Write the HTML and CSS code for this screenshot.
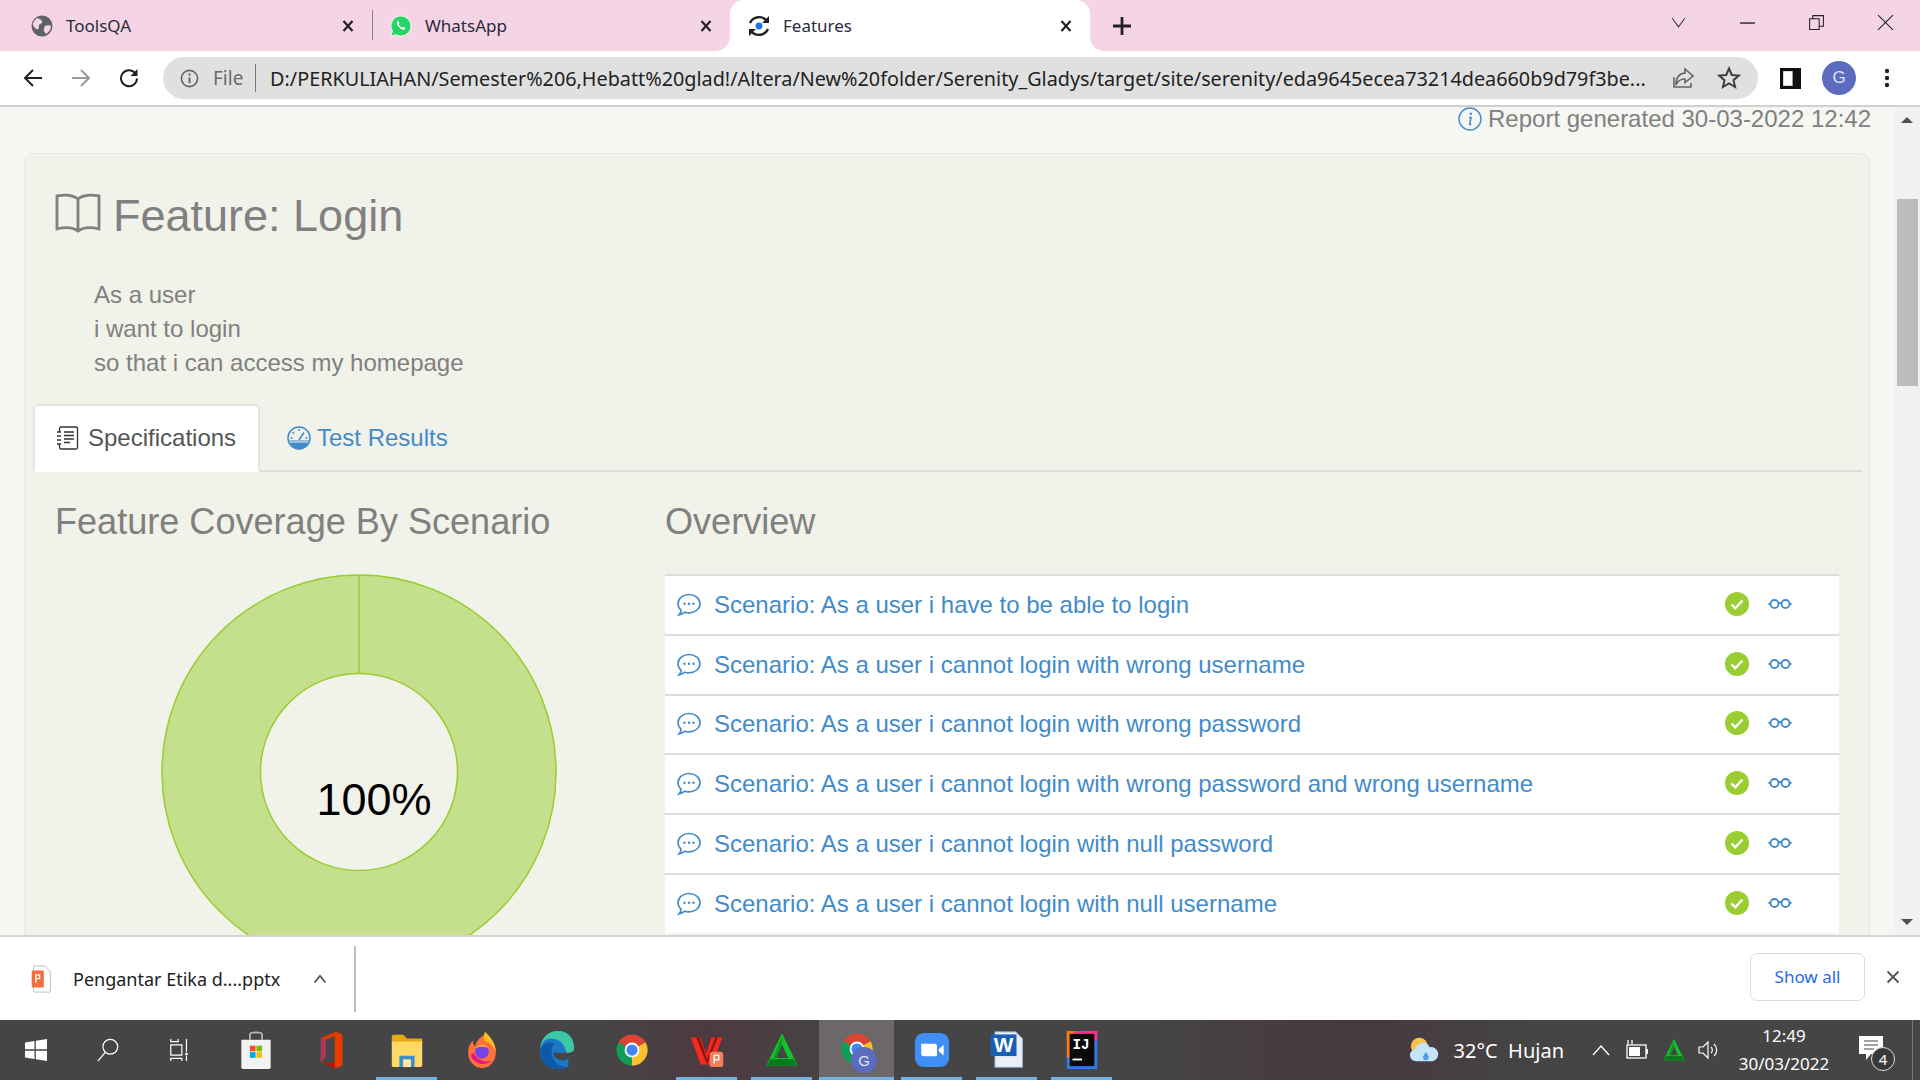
FILE: index.html
```html
<!DOCTYPE html>
<html lang="en">
<head>
<meta charset="utf-8">
<title>Features</title>
<link rel="stylesheet" href="styles.css">
</head>
<body>
<svg class="defs" width="0" height="0" aria-hidden="true">
  <symbol id="chrome" viewBox="0 0 32 32">
    <path d="M16 16 L4 9 A14 14 0 0 1 28.100 9 Z" fill="#db4437"/>
    <path d="M16 16 L28.100 9 A14 14 0 0 1 16 30 Z" fill="#fbc02d"/>
    <path d="M16 16 L16 30 A14 14 0 0 1 4 9 Z" fill="#0f9d58"/>
    <circle cx="16" cy="16" r="6.600" fill="#fff"/>
    <circle cx="16" cy="16" r="5" fill="#4285f4"/>
  </symbol>
  <symbol id="triangle" viewBox="0 0 32 32">
    <path d="M16 1 L30 30 L2 30 Z" fill="#12c42b"/>
    <path d="M2 30 L6 24 L26 24 L30 30 Z" fill="#067a1c"/>
    <path d="M16 11 L21.500 23 L11 23 Z" fill="#444"/>
    <path d="M16 11 L11 23 L8 24 L16 4 Z" fill="#0a9a24"/>
  </symbol>
  <symbol id="chat" viewBox="0 0 24 24">
    <path d="M12 1.500c6 0 11 4 11 9.200s-5 9.200-11 9.200c-1.500 0-2.900-.2-4.200-.7-1.500 1.400-3.300 2.300-5.800 2.800 1.300-1.500 2-2.900 2.200-4.700C2.300 15.600 1 13.300 1 10.700 1 5.500 6 1.500 12 1.500Z" fill="none" stroke="#428bca" stroke-width="1.600"/>
    <circle cx="7.500" cy="10.800" r="1.200" fill="#428bca"/><circle cx="12" cy="10.800" r="1.200" fill="#428bca"/><circle cx="16.500" cy="10.800" r="1.200" fill="#428bca"/>
  </symbol>
  <symbol id="check" viewBox="0 0 24 24">
    <circle cx="12" cy="12" r="12" fill="#9acd32"/>
    <path d="M6.500 12.500 L10.300 16.200 L17.500 8.500" fill="none" stroke="#fff" stroke-width="2.400"/>
  </symbol>
  <symbol id="glasses" viewBox="0 0 24 24">
    <circle cx="6.500" cy="12" r="4" fill="none" stroke="#428bca" stroke-width="1.800"/>
    <circle cx="17.500" cy="12" r="4" fill="none" stroke="#428bca" stroke-width="1.800"/>
    <path d="M10.500 11.500 Q12 10.500 13.500 11.500 M0.500 12 H2.500 M21.500 12 H23.500" fill="none" stroke="#428bca" stroke-width="1.800"/>
  </symbol>
  <symbol id="tabclose" viewBox="0 0 16 16">
    <path d="M3.500 3 L12.500 13 M12.500 3 L3.500 13" fill="none" stroke="#222" stroke-width="2.200"/>
  </symbol>
</svg>

<div class="page">
  <header class="tabstrip">
    <div class="tab tab-first">
      <svg class="fav" viewBox="0 0 22 22"><circle cx="11" cy="11" r="10.500" fill="#5f6368"/><path d="M6 3c2 1 4 1 5 3s-2 3-3 4 1 3-1 4-4-2-5-4 2-5 4-7ZM14 11c2-1 5-1 6 0 0 3-2 6-5 8-1-2-3-3-2-5s0-2 1-3Z" fill="#f5d5e5"/></svg>
      <span class="tab-title">ToolsQA</span>
      <svg class="tab-x"><use href="#tabclose"/></svg>
    </div>
    <span class="tab-sep"></span>
    <div class="tab tab-second">
      <svg class="fav" viewBox="0 0 22 22"><path d="M11 1a10 10 0 0 1 0 20c-1.800 0-3.500-.5-5-1.300L1 21l1.400-4.800A10 10 0 0 1 11 1Z" fill="#25d366" stroke="#fff" stroke-width=".8"/><path d="M7.800 5.800c-1.500 1.300-1.300 3.500.8 6 2.100 2.400 4.400 3.600 6.100 2.800l.8-1.600-2.400-1.300-1 1c-1.300-.5-2.700-2-3.300-3.200l.8-1.100-1.200-2.500Z" fill="#fff"/></svg>
      <span class="tab-title">WhatsApp</span>
      <svg class="tab-x"><use href="#tabclose"/></svg>
    </div>
    <div class="tab tab-active">
      <svg class="fav fav-big" viewBox="0 0 24 24"><path d="M20 7A10 10 0 0 0 3 9M4 17a10 10 0 0 0 17-2" fill="none" stroke="#222" stroke-width="2.400"/><path d="M22 2v7h-7ZM2 22v-7h7Z" fill="#222"/><circle cx="12" cy="12" r="3.400" fill="#1a73e8"/></svg>
      <span class="tab-title">Features</span>
      <svg class="tab-x"><use href="#tabclose"/></svg>
    </div>
    <svg class="newtab" viewBox="0 0 20 20"><path d="M10 1V19M1 10H19" stroke="#222" stroke-width="2.800"/></svg>
    <div class="winctl">
      <svg class="wc" viewBox="0 0 16 16"><path d="M2 4 L8 12 L14 4" fill="none" stroke="#333" stroke-width="1"/></svg>
      <svg class="wc" viewBox="0 0 16 16"><path d="M1 8.500H15" stroke="#111" stroke-width="1.200"/></svg>
      <svg class="wc" viewBox="0 0 16 16"><path d="M1.500 4.500H10.500V14.500H1.500ZM4.500 4.500V1.500H14.500V11.500H10.500" fill="none" stroke="#222" stroke-width="1"/></svg>
      <svg class="wc" viewBox="0 0 16 16"><path d="M1 1 L15 15 M15 1 L1 15" stroke="#222" stroke-width="1"/></svg>
    </div>
  </header>

  <nav class="toolbar">
    <svg class="tb-ico" viewBox="0 0 20 20"><path d="M19 10H2M10 2 L2 10 L10 18" fill="none" stroke="#222" stroke-width="2"/></svg>
    <svg class="tb-ico" viewBox="0 0 20 20"><path d="M1 10H18M10 2 L18 10 L10 18" fill="none" stroke="#9a9a9a" stroke-width="2"/></svg>
    <svg class="tb-ico" viewBox="0 0 20 20"><path d="M16.800 6A8 8 0 1 0 18 10.500" fill="none" stroke="#222" stroke-width="2"/><path d="M18.500 1V8H11.500Z" fill="#222"/></svg>
    <div class="omnibox">
      <svg class="omni-info" viewBox="0 0 20 20"><circle cx="10" cy="10" r="8.500" fill="none" stroke="#5f6368" stroke-width="1.700"/><path d="M10 9V15" stroke="#5f6368" stroke-width="2"/><circle cx="10" cy="6" r="1.200" fill="#5f6368"/></svg>
      <span class="omni-file">File</span>
      <span class="omni-sep"></span>
      <span class="omni-url">D:/PERKULIAHAN/Semester%206,Hebatt%20glad!/Altera/New%20folder/Serenity_Gladys/target/site/serenity/eda9645ecea73214dea660b9d79f3be...</span>
      <svg class="omni-ico" viewBox="0 0 24 24"><path d="M3 11V21H20V17" fill="none" stroke="#5f6368" stroke-width="1.600"/><path d="M14 3 L22 10 L14 16.500V13C9 13 6.500 15 5 19 5 12 8 7.500 14 7Z" fill="none" stroke="#5f6368" stroke-width="1.600"/></svg>
      <svg class="omni-ico omni-star" viewBox="0 0 24 24"><path d="M12 2.500 L14.800 9 L21.800 9.600 L16.500 14.200 L18.100 21 L12 17.400 L5.900 21 L7.500 14.200 L2.200 9.600 L9.200 9Z" fill="none" stroke="#3c4043" stroke-width="2"/></svg>
    </div>
    <svg class="side-ico" viewBox="0 0 20 20"><rect x="1.500" y="1.500" width="17" height="17" fill="none" stroke="#111" stroke-width="3"/><rect x="12" y="2" width="6" height="16" fill="#111"/></svg>
    <div class="avatar">G</div>
    <svg class="menu-ico" viewBox="0 0 6 24"><circle cx="3" cy="5" r="2.200" fill="#222"/><circle cx="3" cy="12" r="2.200" fill="#222"/><circle cx="3" cy="19" r="2.200" fill="#222"/></svg>
  </nav>

  <main class="viewport">
    <div class="content">
      <p class="report">
        <svg class="report-ico" viewBox="0 0 24 24"><circle cx="12" cy="12" r="11" fill="none" stroke="#428bca" stroke-width="1.400"/><path d="M11 10.500h2l-1.300 7h1.500" fill="none" stroke="#428bca" stroke-width="1.600"/><circle cx="12.800" cy="6.800" r="1.300" fill="#428bca"/></svg>
        Report generated 30-03-2022 12:42
      </p>
      <section class="panel">
        <h1 class="title">
          <svg class="book" viewBox="0 0 46 40"><path d="M23 6C18 2 10 1.500 2 3V36C10 34 18 34.500 23 38 28 34.500 36 34 44 36V3C36 1.500 28 2 23 6ZM23 6V38" fill="none" stroke="#808080" stroke-width="2.800"/></svg>
          Feature: Login
        </h1>
        <div class="narrative">
          <div>As a user</div>
          <div>i want to login</div>
          <div>so that i can access my homepage</div>
        </div>
        <div class="tabs">
          <div class="rtab rtab-on">
            <svg class="rtab-ico" viewBox="0 0 24 24"><path d="M4.500 6V2.500a1.500 1.500 0 0 1 1.500-1.500H21a1.500 1.500 0 0 1 1.500 1.500v19a1.500 1.500 0 0 1-1.500 1.500H6a1.500 1.500 0 0 1-1.500-1.500V18" fill="none" stroke="#333" stroke-width="1.300"/><path d="M9 6H19M9 9.500H19M9 13H19M9 16.500H15M2 6H6M2 10H6M2 14H6M2 18H6" stroke="#333" stroke-width="1.400"/></svg>
            <span>Specifications</span>
          </div>
          <div class="rtab rtab-off">
            <svg class="rtab-ico" viewBox="0 0 24 24"><circle cx="12" cy="12" r="11" fill="none" stroke="#428bca" stroke-width="1.500"/><path d="M3.500 17H20.500A10 10 0 0 1 12 23 10 10 0 0 1 3.500 17Z M2 15H22" fill="#428bca" stroke="#428bca"/><path d="M12 14 L17 6.500M12 3V5M5.500 6 L7 7.500M3.500 12H5.500M20.500 12H18.500" fill="none" stroke="#428bca" stroke-width="1.500"/></svg>
            <span>Test Results</span>
          </div>
        </div>
        <div class="columns">
          <div class="col-chart">
            <h2 class="heading">Feature Coverage By Scenario</h2>
            <svg class="donut" viewBox="0 0 400 400">
              <circle cx="200" cy="200" r="148" fill="none" stroke="#c5e08c" stroke-width="99"/>
              <circle cx="200" cy="200" r="197" fill="none" stroke="#9acd32" stroke-width="1.500"/>
              <circle cx="200" cy="200" r="98.500" fill="none" stroke="#9acd32" stroke-width="1.500"/>
              <path d="M200 3V102" stroke="#9acd32" stroke-width="1.500"/>
              <text class="donut-text" x="215" y="243" text-anchor="middle">100%</text>
            </svg>
          </div>
          <div class="col-list">
            <h2 class="heading">Overview</h2>
            <ul class="scenarios">
              <li class="row"><svg class="chat"><use href="#chat"/></svg><span class="row-text">Scenario: As a user i have to be able to login</span><svg class="chk"><use href="#check"/></svg><svg class="gls"><use href="#glasses"/></svg></li>
              <li class="row"><svg class="chat"><use href="#chat"/></svg><span class="row-text">Scenario: As a user i cannot login with wrong username</span><svg class="chk"><use href="#check"/></svg><svg class="gls"><use href="#glasses"/></svg></li>
              <li class="row"><svg class="chat"><use href="#chat"/></svg><span class="row-text">Scenario: As a user i cannot login with wrong password</span><svg class="chk"><use href="#check"/></svg><svg class="gls"><use href="#glasses"/></svg></li>
              <li class="row"><svg class="chat"><use href="#chat"/></svg><span class="row-text">Scenario: As a user i cannot login with wrong password and wrong username</span><svg class="chk"><use href="#check"/></svg><svg class="gls"><use href="#glasses"/></svg></li>
              <li class="row"><svg class="chat"><use href="#chat"/></svg><span class="row-text">Scenario: As a user i cannot login with null password</span><svg class="chk"><use href="#check"/></svg><svg class="gls"><use href="#glasses"/></svg></li>
              <li class="row"><svg class="chat"><use href="#chat"/></svg><span class="row-text">Scenario: As a user i cannot login with null username</span><svg class="chk"><use href="#check"/></svg><svg class="gls"><use href="#glasses"/></svg></li>
            </ul>
          </div>
        </div>
      </section>
    </div>
    <aside class="scrollbar">
      <span class="sb-up"></span>
      <span class="sb-thumb"></span>
      <span class="sb-down"></span>
    </aside>
  </main>

  <section class="downloads">
    <svg class="dl-file" viewBox="0 0 22 30"><path d="M3 1H15L21 7V28A1 1 0 0 1 20 29H4A1 1 0 0 1 3 28Z" fill="#fff" stroke="#bbb"/><rect x="1" y="6" width="13" height="18" rx="1" fill="#f0703c"/><path d="M5.500 19V10.500H9.500V14.500H5.500" fill="none" stroke="#fff" stroke-width="1.400"/></svg>
    <span class="dl-name">Pengantar Etika d....pptx</span>
    <svg class="dl-chev" viewBox="0 0 14 10"><path d="M1.500 8.500 L7 2 L12.500 8.500" fill="none" stroke="#555" stroke-width="1.800"/></svg>
    <span class="dl-sep"></span>
    <button class="showall">Show all</button>
    <svg class="dl-close" viewBox="0 0 14 14"><path d="M1.500 1.500 L12.500 12.500 M12.500 1.500 L1.500 12.500" stroke="#555" stroke-width="1.800"/></svg>
  </section>

  <footer class="taskbar">
    <div class="slot slot-sys">
      <svg class="tb-app" viewBox="0 0 24 24"><path d="M1 4.500 L10.500 3V11.300H1ZM11.800 2.800 L23 1V11.300H11.800ZM1 12.700H10.500V21 L1 19.500ZM11.800 12.700H23V23 L11.800 21.200Z" fill="#fff"/></svg>
    </div>
    <div class="slot slot-sys">
      <svg class="tb-app" viewBox="0 0 26 26"><circle cx="15.500" cy="9.500" r="8" fill="none" stroke="#fff" stroke-width="1.300"/><path d="M10 15.500 L2 25" stroke="#fff" stroke-width="1.400"/></svg>
    </div>
    <div class="slot slot-sys">
      <svg class="tb-app" viewBox="0 0 26 26"><path d="M3 1V4H11V1M3 25V22H15V25M20 1V15M20 19V25M3 7.500H15V18.500H3Z" fill="none" stroke="#fff" stroke-width="1.300"/><rect x="18.700" y="16" width="2.600" height="2.600" fill="#fff"/></svg>
    </div>
    <div class="slot slot-store">
      <svg class="app" viewBox="0 0 36 44"><path d="M11 10V4C11 2 13 1.500 18 1.500S25 2 25 4V10" fill="none" stroke="#bbb" stroke-width="2"/><path d="M1 10H35V42A2 2 0 0 1 33 44H3A2 2 0 0 1 1 42Z" fill="#f2f2f2"/><rect x="11" y="17" width="6.500" height="6.500" fill="#f25022"/><rect x="18.500" y="17" width="6.500" height="6.500" fill="#7fba00"/><rect x="11" y="24.500" width="6.500" height="6.500" fill="#00a4ef"/><rect x="18.500" y="24.500" width="6.500" height="6.500" fill="#ffb900"/></svg>
    </div>
    <div class="slot">
      <svg class="app" viewBox="0 0 32 44"><path d="M3 8 L20 1 L28 4V40 L20 43 L3 36 L19 38V6 L9 10V30 L3 36Z" fill="#d83b01"/><path d="M3 8 L9 10V30 L3 36Z" fill="#a33a5a"/><path d="M20 1 L28 4V40 L20 43Z" fill="#eb3c00"/><path d="M3 36 L19 38V43Z" fill="#b7100c"/></svg>
    </div>
    <div class="slot slot-open">
      <svg class="app" viewBox="0 0 36 40"><path d="M2 6A2 2 0 0 1 4 4H14L18 8H34V14H2Z" fill="#e6a817"/><path d="M2 11H34V36A2 2 0 0 1 32 38H4A2 2 0 0 1 2 36Z" fill="#ffd966"/><path d="M10 38V26H26V38H22V30H14V38Z" fill="#3b8ed0"/><rect x="14" y="30" width="8" height="8" fill="#ffe9a3"/></svg>
    </div>
    <div class="slot">
      <svg class="app" viewBox="0 0 36 44"><path d="M18 6C26 6 34 13 34 25A16 18 0 0 1 2 25C2 18 5 13 8 11 7 14 8 16 10 18 11 13 14 9 18 6Z" fill="#ff7139"/><path d="M22 1C25 6 34 11 34 25 32 15 24 13 20 10 19 7 20 4 22 1Z" fill="#ffc01f"/><path d="M5 28C8 38 22 42 30 34 24 38 12 34 8 25Z" fill="#e31587"/><circle cx="18" cy="24" r="8" fill="#7542e5"/><path d="M10 20 C14 14 22 14 26 20 22 18 15 18 10 20Z" fill="#ff9a3c"/></svg>
    </div>
    <div class="slot">
      <svg class="app app-wide" viewBox="0 0 40 44"><path d="M2 24C2 10 10 2 21 2 32 2 38 10 38 20 38 24 35 25 30 25H16C16 30 22 33 27 33L32 31 32 39C28 41 25 42 21 42 10 42 2 34 2 24Z" fill="#1b78c9"/><path d="M21 2C32 2 38 10 38 20 38 24 35 25 30 25 28 15 22 10 13 10 8 10 4 14 2 22 3 10 10 2 21 2Z" fill="#3cc8a4"/><path d="M2 22C6 13 14 12 18 16 14 18 13 24 16 31 19 37 24 40 30 40 27 42 24 42 21 42 10 42 2 34 2 22Z" fill="#0c5aa8"/></svg>
    </div>
    <div class="slot">
      <svg class="app app-chrome"><use href="#chrome"/></svg>
    </div>
    <div class="slot slot-open">
      <svg class="app" viewBox="0 0 40 40"><path d="M2 6H13L19 24 25 6H37L26 36H13Z" fill="#f52a1e"/><path d="M8 6H12L20 30 29 6H32L20 36Z" fill="#8e1610"/><rect x="23" y="22" width="15" height="17" rx="3" fill="#f47d5c"/><path d="M28 35V26H33V31H28" fill="none" stroke="#fff" stroke-width="1.500"/></svg>
    </div>
    <div class="slot slot-open">
      <svg class="app"><use href="#triangle"/></svg>
    </div>
    <div class="slot slot-current">
      <svg class="app app-chrome"><use href="#chrome"/></svg>
      <span class="badge-g">G</span>
    </div>
    <div class="slot slot-open slot-zoom">
      <svg class="app" viewBox="0 0 40 40"><rect x="1" y="1" width="38" height="38" rx="10" fill="#3f8ff7"/><path d="M8 13H23A2.500 2.500 0 0 1 25.500 15.500V27H11A3 3 0 0 1 8 24ZM27.500 19 L33 14.500V26 L27.500 21.500Z" fill="#fff"/></svg>
    </div>
    <div class="slot slot-open">
      <svg class="app" viewBox="0 0 40 44"><path d="M6 1H30L38 9V42H6Z" fill="#e9eef7" stroke="#8fb3e3"/><rect x="1" y="4" width="30" height="25" fill="#1a5fb4"/><text class="word-w" x="16" y="24" text-anchor="middle">W</text></svg>
    </div>
    <div class="slot slot-open">
      <svg class="app" viewBox="0 0 32 40"><rect width="32" height="40" fill="#2b7de9"/><path d="M0 0H32V10H0Z" fill="#fc318c"/><path d="M0 0H8V28H0Z" fill="#f97a12"/><rect x="3" y="3" width="26" height="34" fill="#0a0a0a"/><text class="ij" x="6" y="19">IJ</text><rect x="6" y="29" width="10" height="2" fill="#fff"/></svg>
    </div>
    <div class="tray">
      <svg class="tray-weather" viewBox="0 0 32 32"><circle cx="11" cy="12" r="9" fill="#f4c24d"/><path d="M8 28A6.500 6.500 0 0 1 7 15 8 8 0 0 1 22 13 7.500 7.500 0 0 1 25 28Z" fill="#c4e4fa"/><path d="M18 18C20 21 21 22 21 24A3 3 0 0 1 15 24C15 22 16 21 18 18Z" fill="#4a9fe8"/></svg>
      <span class="tray-weather-text">32°C&nbsp; Hujan</span>
      <svg class="tray-chev" viewBox="0 0 18 12"><path d="M1 11 L9 2 L17 11" fill="none" stroke="#fff" stroke-width="1.300"/></svg>
      <svg class="tray-batt" viewBox="0 0 24 22"><rect x="2" y="6" width="19" height="13" fill="none" stroke="#fff" stroke-width="1.300"/><rect x="4" y="8" width="11" height="9" fill="#fff"/><rect x="21" y="10" width="2" height="5" fill="#fff"/><path d="M3 1V5M7 1V5" stroke="#fff" stroke-width="1.300"/></svg>
      <svg class="tray-green"><use href="#triangle"/></svg>
      <svg class="tray-spk" viewBox="0 0 24 24"><path d="M2 9H6L11 4V20L6 15H2Z" fill="none" stroke="#fff" stroke-width="1.200"/><path d="M14 9A4 4 0 0 1 14 15M17 6A8 8 0 0 1 17 18" fill="none" stroke="#fff" stroke-width="1.200"/></svg>
      <div class="clock"><span>12:49</span><span>30/03/2022</span></div>
      <div class="notify">
        <svg class="notify-ico" viewBox="0 0 26 30"><path d="M1 1H25V19H13L8 25V19H1Z" fill="#fff"/><path d="M6 6H20M6 10H20M6 14H16" stroke="#444" stroke-width="1.200"/></svg>
        <span class="notify-num">4</span>
      </div>
      <span class="peek"></span>
    </div>
  </footer>
</div>
</body>
</html>
```

FILE: styles.css
```css
* { box-sizing: border-box; }
html, body { margin: 0; height: 100%; overflow: hidden; }
body { font-family: "Liberation Sans", Arial, sans-serif; }
.defs { position: absolute; }
.page { display: flex; flex-direction: column; height: 1080px; width: 1920px; background: #fff; }

/* browser tabs */
.tabstrip { flex: 0 0 51px; display: flex; align-items: center; background: #f5d5e5; }
.tab { height: 51px; display: flex; align-items: center; font-family: "Noto Sans", sans-serif; font-size: 17px; color: #2a2a3a; position: relative; }
.tab-first { width: 372px; padding-left: 31px; }
.tab-sep { width: 1px; height: 30px; margin-bottom: 2px; background: #8d8088; flex: none; }
.tab-second { width: 357px; padding-left: 17px; }
.tab-active { width: 360px; padding-left: 18px; background: #fff; border-radius: 14px 14px 0 0; }
.tab-active::before, .tab-active::after { content: ""; position: absolute; bottom: 0; width: 14px; height: 14px; }
.tab-active::before { left: -14px; background: radial-gradient(circle at 0 0, #f5d5e5 13.500px, #fff 14px); }
.tab-active::after { right: -14px; background: radial-gradient(circle at 100% 0, #f5d5e5 13.500px, #fff 14px); }
.fav { width: 22px; height: 22px; flex: none; }
.fav-big { width: 24px; height: 24px; margin-left: -1px; }
.tab-title { margin-left: 13px; flex: 1; }
.tab-active .tab-title { margin-left: 12px; }
.tab-x { width: 16px; height: 16px; flex: none; margin-right: 16px; }
.newtab { width: 20px; height: 20px; margin-left: 22px; }
.winctl { margin-left: auto; display: flex; gap: 52px; padding-right: 26px; align-items: center; }
.wc { width: 17px; height: 17px; margin-top: -6px; }

/* toolbar */
.toolbar { flex: 0 0 56px; display: flex; align-items: center; padding-left: 23px; border-bottom: 2px solid #d0d0d0; background: #fff; position: relative; z-index: 1; }
.tb-ico { width: 20px; height: 20px; margin-right: 28px; flex: none; }
.omnibox { width: 1595px; height: 42px; margin-left: -4px; border-radius: 21px; background: #e0e0e0; display: flex; align-items: center; padding-left: 17px; font-family: "Noto Sans", sans-serif; flex: none; }
.omni-info { width: 19px; height: 19px; flex: none; }
.omni-file { margin-left: 14px; font-size: 19px; color: #6b6b6b; }
.omni-sep { width: 1px; height: 28px; background: #777; margin: 0 13.700px 0 12px; flex: none; }
.omni-url { font-size: 19.800px; color: #222; white-space: nowrap; width: 1383px; flex: none; }
.omni-ico { width: 24px; height: 24px; flex: none; margin-left: 18.400px; }
.omni-star { margin-left: 22px; }
.side-ico { width: 21px; height: 21px; margin-left: 22px; flex: none; }
.avatar { width: 34px; height: 34px; border-radius: 50%; margin-left: 21px; background: #5c6bc0; color: #dfe3f5; font-size: 17px; display: flex; align-items: center; justify-content: center; flex: none; }
.menu-ico { width: 6px; height: 24px; margin-left: 28px; flex: none; }

.viewport { flex: 1; min-height: 0; display: flex; overflow: hidden; background: #f6f7f3; margin-top: -6px; }
.content { flex: 1; min-width: 0; padding: 6px 25px 0 24px; overflow: hidden; }
.report { margin: 0 -1px 0 0; height: 46px; display: flex; justify-content: flex-end; align-items: flex-start; gap: 6px; font-size: 24px; line-height: 24px; color: #808080; }
.report-ico { width: 24px; height: 24px; flex: none; }
.panel { background: #f1f2e9; border: 1px solid #e9eae2; border-radius: 9px; padding: 37px 7px 0 8px; }
.title { margin: 0; padding-left: 22px; display: flex; align-items: center; gap: 12px; height: 50px; font-size: 45px; font-weight: 400; color: #808080; }
.book { width: 46px; height: 40px; margin-top: -6px; flex: none; }
.narrative { margin-top: 37px; padding-left: 61px; font-size: 24px; line-height: 34px; color: #808080; }
.tabs { margin-top: 24px; height: 68px; display: flex; border-bottom: 2px solid #dddddd; }
.rtab { height: 68px; display: flex; align-items: center; font-size: 24px; color: #428bca; border: 2px solid transparent; }
.rtab-on { width: 227px; padding-left: 20px; gap: 9px; background: #fff; color: #555; border-color: #e4e4e4; border-bottom-color: #fff; border-radius: 5px 5px 0 0; }
.rtab-off { padding-left: 25px; gap: 6px; }
.rtab-ico { width: 24px; height: 24px; flex: none; }
.columns { display: flex; }
.col-chart { flex: 0 0 632px; padding-left: 22px; }
.col-list { flex: 0 0 1174px; }
.heading { margin: 30px 0 0; height: 40px; font-size: 36.100px; line-height: 40px; font-weight: 400; color: #808080; }
.donut { display: block; width: 400px; height: 400px; margin: 30px 0 0 104px; }
.donut-text { font-family: "Liberation Sans", sans-serif; font-size: 45px; fill: #000; }
.scenarios { list-style: none; margin: 32px 0 0; padding: 0; }
.row { height: 59.800px; background: #fff; border-top: 2px solid #dddddd; display: flex; align-items: center; padding: 0 47px 0 12px; font-size: 24px; color: #428bca; }
.chat, .chk, .gls { width: 24px; height: 24px; flex: none; }
.chk, .gls { margin-top: -2px; }
.row-text { flex: 1; margin-left: 13px; }
.gls { margin-left: 19px; }

/* scrollbar */
.scrollbar { flex: 0 0 25px; background: #f1f1f1; display: flex; flex-direction: column; align-items: flex-end; padding-top: 6px; }
.sb-thumb { width: 21px; height: 187px; background: #bcbcbc; margin: 76px 2px 0 0; }
.sb-up, .sb-down { width: 0; height: 0; border-left: 6px solid transparent; border-right: 6px solid transparent; margin-right: 7px; }
.sb-up { border-bottom: 6px solid #505050; margin-top: 10px; }
.sb-down { border-top: 6px solid #505050; margin-top: auto; margin-bottom: 10px; }

/* downloads */
.downloads { flex: 0 0 85px; display: flex; align-items: center; background: #fff; border-top: 2px solid #d4d4d4; padding-left: 30px; font-family: "Noto Sans", sans-serif; }
.dl-file { width: 22px; height: 28px; flex: none; }
.dl-name { margin-left: 21px; font-size: 18px; color: #222; width: 194px; white-space: nowrap; flex: none; }
.dl-chev { width: 14px; height: 10px; margin-left: 46px; flex: none; }
.dl-sep { width: 2px; height: 66px; margin-left: 27px; background: #bdbdbd; flex: none; }
.showall { margin: 0 0 4px auto; width: 115px; height: 48px; border: 1px solid #dadce0; border-radius: 7px; background: #fff; color: #1f6ce8; font-family: "Noto Sans", sans-serif; font-size: 17px; padding: 0; }
.dl-close { width: 14px; height: 14px; margin: 0 20px 4px 21px; flex: none; }

/* taskbar */
.taskbar { flex: 0 0 60px; display: flex; align-items: stretch; background: linear-gradient(90deg, #454545 0, #454545 31%, #4d3a40 37%, #454545 44%, #454545 60%, #473a40 68%, #463a40 72%, #454545 80%); color: #fff; }
.slot { flex: 0 0 75px; display: flex; align-items: center; justify-content: center; position: relative; }
.slot-sys { flex-basis: 72px; }
.slot-store { flex-basis: 76px; margin-left: 2px; }
.slot-open { background: linear-gradient(#6fb2e3, #6fb2e3) center bottom / 61px 3px no-repeat; }
.slot-current { background: #6c6769; border-bottom: 3px solid #6fb2e3; }
.tb-app { width: 24px; height: 24px; }
.app { width: 36px; height: 38px; }
.app-wide { width: 38px; height: 42px; }
.app-chrome { width: 36px; height: 36px; }
.badge-g { position: absolute; left: 32px; top: 27px; width: 26px; height: 26px; border-radius: 50%; background: #5c6bc0; color: #dfe3f5; font-size: 15px; display: flex; align-items: center; justify-content: center; }
.word-w { font-family: "Liberation Sans", sans-serif; font-size: 24px; font-weight: 700; fill: #fff; }
.ij { font-family: "Liberation Mono", monospace; font-size: 15px; font-weight: 700; fill: #fff; }
.tray { margin-left: auto; display: flex; align-items: center; font-family: "Noto Sans", sans-serif; }
.tray-weather { width: 30px; height: 30px; flex: none; }
.tray-weather-text { margin-left: 15px; font-size: 20px; white-space: nowrap; }
.tray-chev { width: 18px; height: 12px; margin-left: 28px; flex: none; }
.tray-batt { width: 24px; height: 22px; margin-left: 15px; flex: none; }
.tray-green { width: 24px; height: 26px; margin-left: 13px; flex: none; }
.tray-spk { width: 24px; height: 24px; margin-left: 11px; flex: none; }
.clock { width: 112px; margin-left: 7px; display: flex; flex-direction: column; align-items: center; font-size: 17px; line-height: 28px; }
.notify { width: 44px; margin: 0 19px 0 9px; position: relative; height: 60px; display: flex; align-items: center; justify-content: center; }
.notify-ico { width: 26px; height: 30px; }
.notify-num { position: absolute; left: 22px; top: 27px; width: 24px; height: 24px; border-radius: 50%; background: #3a3a3a; border: 1px solid #ddd; font-size: 15px; display: flex; align-items: center; justify-content: center; }
.peek { width: 1px; height: 60px; margin-right: 7px; background: #777; flex: none; }
```
